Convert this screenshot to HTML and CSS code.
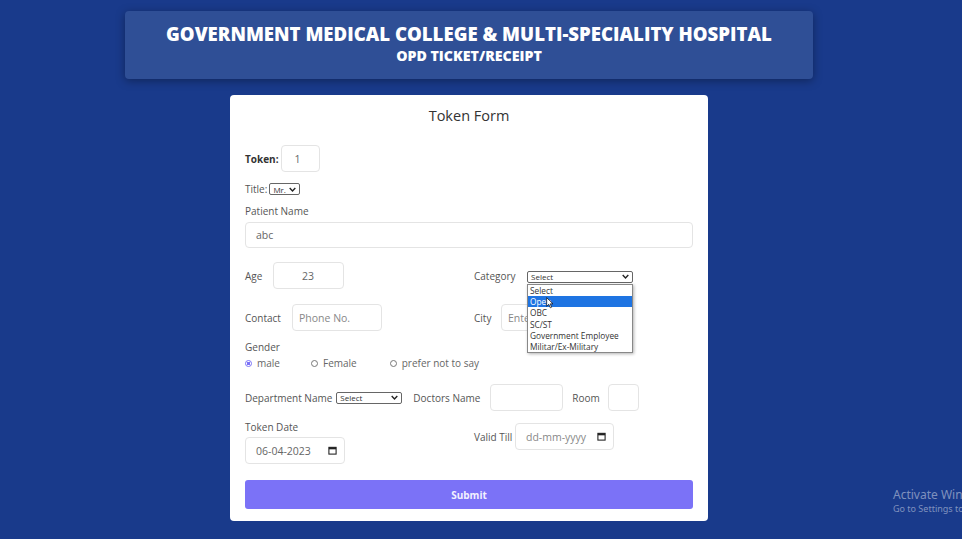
FILE: index.html
```html
<!DOCTYPE html>
<html>
<head>
<meta charset="utf-8">
<link rel="stylesheet" href="styles.css">
</head>
<body>
<div class="page">
  <header class="banner">
    <h1>GOVERNMENT MEDICAL COLLEGE &amp; MULTI-SPECIALITY HOSPITAL</h1>
    <h2>OPD TICKET/RECEIPT</h2>
  </header>

  <form class="card">
    <div class="card-title">Token Form</div>

    <div class="row token-row">
      <label class="bold">Token:</label>
      <div class="field w39">1</div>
    </div>

    <div class="row title-row">
      <label>Title:</label>
      <div class="select sel-title"><span>Mr.</span><svg class="chev" viewBox="0 0 10 6"><path d="M1 1l4 4 4-4" fill="none" stroke="#222" stroke-width="2"/></svg></div>
    </div>

    <label class="block-label pn-label">Patient Name</label>
    <div class="field full">abc</div>

    <div class="grid2 age-row">
      <div class="row">
        <label class="lbl-age">Age</label>
        <div class="field w71 pad-num">23</div>
      </div>
      <div class="row">
        <label class="lbl-cat">Category</label>
        <div class="select sel-cat"><span>Select</span><svg class="chev" viewBox="0 0 10 6"><path d="M1 1l4 4 4-4" fill="none" stroke="#222" stroke-width="2"/></svg></div>
      </div>
    </div>

    <div class="grid2 contact-row">
      <div class="row">
        <label class="lbl-contact">Contact</label>
        <div class="field w90 ph pad6">Phone No.</div>
      </div>
      <div class="row">
        <label class="lbl-city">City</label>
        <div class="field w130 ph pad6">Enter City</div>
      </div>
    </div>

    <label class="block-label gender-label">Gender</label>
    <div class="radios">
      <span class="radio"><i class="dot on"></i>male</span>
      <span class="radio r2"><i class="dot"></i>Female</span>
      <span class="radio r3"><i class="dot"></i>prefer not to say</span>
    </div>

    <div class="row dept-row">
      <label>Department Name</label>
      <div class="select sel-dept"><span>Select</span><svg class="chev" viewBox="0 0 10 6"><path d="M1 1l4 4 4-4" fill="none" stroke="#222" stroke-width="2"/></svg></div>
      <label class="lbl-doc">Doctors Name</label>
      <div class="field w73"></div>
      <label class="lbl-room">Room</label>
      <div class="field w31"></div>
    </div>

    <div class="grid2 date-row">
      <div>
        <label class="block-label">Token Date</label>
        <div class="field w100 date"><span>06-04-2023</span><svg class="cal" viewBox="0 0 10 10"><rect x="1" y="1.5" width="8" height="7.5" fill="none" stroke="#222" stroke-width="1.2"/><rect x="1" y="1.5" width="8" height="2.2" fill="#222"/></svg></div>
      </div>
      <div class="row valid">
        <label class="lbl-valid">Valid Till</label>
        <div class="field w99 date ph"><span>dd-mm-yyyy</span><svg class="cal" viewBox="0 0 10 10"><rect x="1" y="1.5" width="8" height="7.5" fill="none" stroke="#222" stroke-width="1.2"/><rect x="1" y="1.5" width="8" height="2.2" fill="#222"/></svg></div>
      </div>
    </div>

    <div class="submit">Submit</div>

    <ul class="dropdown">
      <li>Select</li>
      <li class="hl">Open</li>
      <li>OBC</li>
      <li>SC/ST</li>
      <li>Government Employee</li>
      <li>Militar/Ex-Military</li>
      <svg class="cursor" viewBox="0 0 12 18"><path d="M1 1v13l3.2-3 2.3 5.2 2-0.9-2.3-5h4.3z" fill="#fff" stroke="#000" stroke-width="1"/></svg>
    </ul>
  </form>

  <div class="watermark">
    <div class="wm1">Activate Windows</div>
    <div class="wm2">Go to Settings to activate Windows.</div>
  </div>
</div>
</body>
</html>
```

FILE: styles.css
```css
* { box-sizing: border-box; margin: 0; padding: 0; }
html, body { width: 962px; height: 539px; overflow: hidden; }
body {
  background: #193a8b;
  font-family: "Open Sans", "Noto Sans", sans-serif;
  color: #555;
}
.page {
  position: relative;
  width: 962px;
  height: 539px;
  padding-top: 11px;
  overflow: hidden;
}
.banner {
  width: 688px;
  height: 68px;
  margin-left: 125px;
  background: #2f4f96;
  border-radius: 4px;
  box-shadow: 0 2px 10px rgba(0,0,0,0.35);
  text-align: center;
  color: #fff;
  padding-top: 10px;
}
.banner h1 {
  font-size: 18.6px;
  font-weight: 800;
  line-height: 25px;
}
.banner h2 {
  font-size: 14.2px;
  font-weight: 800;
  line-height: 20px;
  margin-top: 0px;
}
.card {
  position: relative;
  width: 478px;
  height: 426px;
  margin: 16px 0 0 230px;
  background: #fff;
  border-radius: 4px;
  padding: 11px 15px 12px;
  font-size: 10px;
}
.card-title {
  text-align: center;
  font-size: 14.5px;
  line-height: 20px;
  color: #333;
}
label { color: #555; white-space: nowrap; }
.bold { font-weight: 700; color: #333; }
.row { display: flex; align-items: center; }
.field {
  height: 27px;
  border: 1px solid #e4e4e4;
  border-radius: 4px;
  display: flex;
  align-items: center;
  padding-left: 10px;
  color: #666;
  font-size: 10.5px;
}
.ph { color: #888; }
.pad6 { padding-left: 6px; }
.token-row { margin-top: 19px; }
.token-row label { margin-right: 2px; }
.w39 { width: 39px; padding-left: 13px; }
.title-row { margin-top: 10px; height: 14px; }
.title-row label { margin-right: 2px; }
.select {
  display: flex;
  align-items: center;
  justify-content: space-between;
  border: 1px solid #666;
  border-radius: 2px;
  height: 12px;
  padding: 0 3px;
  font-size: 8px;
  color: #333;
  background: #fff;
}
.chev { width: 7px; height: 5px; }
.sel-title { width: 31px; }
.block-label { display: block; line-height: 14px; }
.pn-label { margin-top: 8px; }
.full { width: 448px; height: 26px; margin-top: 4px; }
.grid2 { display: grid; grid-template-columns: 219px 219px; column-gap: 10px; }
.age-row { margin-top: 14px; }
.lbl-age { width: 28px; }
.w71 { width: 71px; }
.pad-num { padding-left: 28px; }
.lbl-cat { width: 53px; }
.sel-cat { width: 106px; margin-top: 2px; }
.contact-row { margin-top: 15px; }
.lbl-contact { width: 47px; }
.w90 { width: 90px; }
.lbl-city { width: 27px; }
.w130 { width: 130px; }
.gender-label { margin-top: 9px; }
.radios { display: flex; margin-top: 2px; height: 14px; align-items: center; color: #666; }
.radio { display: flex; align-items: center; }
.r2 { margin-left: 31px; }
.r3 { margin-left: 33px; }
.dot {
  width: 7px; height: 7px; border-radius: 50%;
  border: 1px solid #777; margin-right: 5px; display: inline-block;
}
.dot.on { border-color: #7b72f7; background: radial-gradient(circle, #7b72f7 45%, #fff 55%); }
.dept-row { margin-top: 14px; }
.sel-dept { width: 66px; margin-left: 4px; }
.lbl-doc { margin-left: 11px; width: 77px; }
.w73 { width: 73px; }
.lbl-room { margin-left: 9px; width: 36px; }
.w31 { width: 31px; }
.date-row { margin-top: 9px; }
.w100 { width: 100px; margin-top: 3px; }
.w99 { width: 99px; }
.date { justify-content: space-between; padding-right: 7px; }
.cal { width: 9px; height: 9px; }
.valid { align-self: start; margin-top: 3px; }
.lbl-valid { width: 41px; }
.submit {
  margin-top: 16px;
  height: 29px;
  background: #7b72f7;
  border-radius: 3px;
  color: #f3f1ff;
  font-weight: 700;
  font-size: 10px;
  display: flex; align-items: center; justify-content: center;
}
.dropdown {
  position: absolute;
  left: 297px;
  top: 189px;
  width: 106px;
  list-style: none;
  background: #fff;
  border: 1px solid #888;
  box-shadow: 1px 1px 3px rgba(0,0,0,0.3);
  font-size: 8.3px;
  color: #333;
}
.dropdown li { height: 11.2px; line-height: 11.2px; padding-left: 2px; }
.dropdown li.hl { background: #1e74e2; color: #fff; }
.cursor { position: absolute; left: 18px; top: 12px; width: 8px; height: 12px; }
.watermark {
  position: absolute;
  left: 893px;
  top: 487px;
  white-space: nowrap;
  color: rgba(255,255,255,0.45);
  font-family: "Noto Sans", sans-serif;
}
.wm1 { font-size: 12px; line-height: 15px; }
.wm2 { font-size: 9px; line-height: 13px; }
```
